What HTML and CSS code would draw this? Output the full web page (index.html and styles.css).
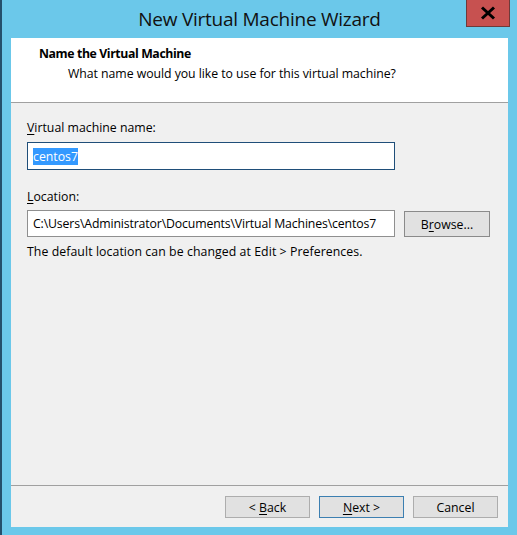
FILE: index.html
```html
<!DOCTYPE html>
<html>
<head>
<meta charset="utf-8">
<link rel="stylesheet" href="styles.css">
</head>
<body>
<div class="window">
  <div class="titlebar">
    <div class="title">New Virtual Machine Wizard</div>
    <div class="close">
      <svg width="16" height="14" viewBox="0 0 16 14"><path d="M2 1.5 L14 12.5 M14 1.5 L2 12.5" stroke="#000" stroke-width="3" fill="none"/></svg>
    </div>
  </div>
  <div class="client">
    <div class="header">
      <div class="h-title">Name the Virtual Machine</div>
      <div class="h-sub">What name would you like to use for this virtual machine?</div>
    </div>
    <div class="body">
      <div class="label"><u>V</u>irtual machine name:</div>
      <div class="field focused"><span class="sel">centos7</span></div>
      <div class="label loc-label"><u>L</u>ocation:</div>
      <div class="row">
        <div class="field loc">C:\Users\Administrator\Documents\Virtual Machines\centos7</div>
        <div class="btn browse"><span>B<u>r</u>owse...</span></div>
      </div>
      <div class="hint">The default location can be changed at Edit &gt; Preferences.</div>
    </div>
    <div class="footer">
      <div class="btn"><span>&lt; <u>B</u>ack</span></div>
      <div class="btn default"><span><u>N</u>ext &gt;</span></div>
      <div class="btn"><span>Cancel</span></div>
    </div>
  </div>
</div>
</body>
</html>
```
FILE: styles.css
```css
html, body {
  margin: 0;
  padding: 0;
}
body {
  width: 517px;
  height: 535px;
  overflow: hidden;
  background: #6bc8ea;
  font-family: "Open Sans", "Noto Sans", sans-serif;
  font-size: 12.3px;
  color: #000;
}
.window {
  position: relative;
  box-sizing: border-box;
  height: 535px;
  border-left: 2px solid #25506c;
  padding: 0 9px 8px 9px;
  display: flex;
  flex-direction: column;
}
.titlebar {
  height: 38px;
  display: flex;
  align-items: center;
  justify-content: center;
}
.title {
  font-size: 19px;
  letter-spacing: -0.25px;
  color: #111;
  margin-top: -1px;
}
.close {
  position: absolute;
  top: 0;
  left: 464px;
  width: 44px;
  height: 27px;
  box-sizing: border-box;
  background: #c75150;
  border: 1px solid #6e3a3a;
  border-top: none;
  display: flex;
  align-items: center;
  justify-content: center;
}
.client {
  flex: 1;
  background: #f0f0f0;
  display: flex;
  flex-direction: column;
}
.header {
  height: 65px;
  box-sizing: border-box;
  background: #fff;
  border-bottom: 1px solid #a0a0a0;
  padding-top: 8px;
}
.h-title {
  font-weight: bold;
  line-height: 16px;
  padding-left: 28px;
  letter-spacing: -0.4px;
}
.h-sub {
  line-height: 16px;
  margin-top: 4px;
  padding-left: 57px;
  letter-spacing: -0.05px;
}
.body {
  padding: 17px 16px 0 16px;
}
.label {
  line-height: 16px;
}
.field {
  box-sizing: border-box;
  width: 368px;
  height: 28px;
  margin-top: 6px;
  background: #fff;
  border: 1px solid #7a7a7a;
  padding: 0 5px;
  display: flex;
  align-items: center;
  white-space: nowrap;
  overflow: hidden;
}
.field.focused {
  border-color: #1f4e79;
}
.sel {
  background: #3399ff;
  color: #fff;
  line-height: 17px;
}
.loc-label {
  margin-top: 19px;
}
.row {
  display: flex;
  align-items: flex-start;
  margin-top: 5px;
}
.field.loc {
  margin-top: 0;
  height: 27px;
  border-color: #8f8f8f;
  letter-spacing: -0.15px;
}
.btn {
  box-sizing: border-box;
  width: 85px;
  height: 22px;
  background: #e1e1e1;
  border: 1px solid #adadad;
  display: flex;
  align-items: center;
  justify-content: center;
  white-space: pre;
}
.browse {
  margin-left: 9px;
  margin-top: 1px;
  width: 86px;
  height: 26px;
  border-color: #8a8a8a;
}
.hint {
  line-height: 16px;
  margin-top: 7px;
  letter-spacing: 0.07px;
}
.footer {
  margin-top: auto;
  border-top: 1px solid #a0a0a0;
  padding: 10px 10px 9px 0;
  display: flex;
  justify-content: flex-end;
  gap: 9px;
}
.btn.default {
  border-color: #3c7fb1;
}
u {
  text-decoration-thickness: 1px;
  text-underline-offset: 2px;
}
```
